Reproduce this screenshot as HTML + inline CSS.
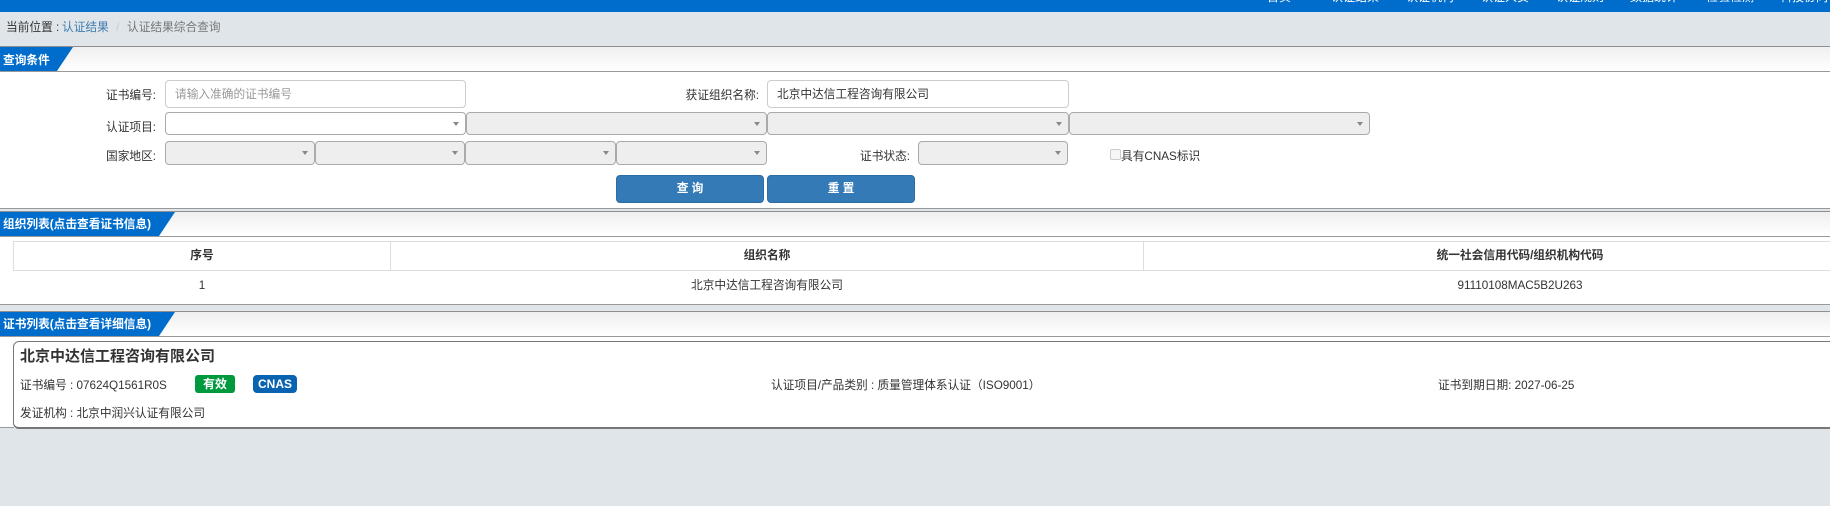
<!DOCTYPE html>
<html lang="zh-CN">
<head>
<meta charset="utf-8">
<title>认证结果综合查询</title>
<style>
html,body{margin:0;padding:0;width:1830px;height:506px;overflow:hidden;background:#e0e5e9;}
body{position:relative;font-family:"Liberation Sans","Noto Sans CJK SC",sans-serif;font-size:11.7px;color:#333;}
div,span{box-sizing:border-box;}
.a{position:absolute;}
.t{position:absolute;white-space:nowrap;line-height:20px;height:20px;margin-top:1px;}
.r{text-align:right;}
.c{text-align:center;transform:translateX(-50%);}
.nav{color:#fff;top:-13px;margin-top:0;font-size:12px;}
.white{position:absolute;left:0;width:1830px;background:#fff;}
.bar{position:absolute;left:0;width:1830px;height:26px;border-top:1px solid #8f8f8f;border-bottom:1px solid #999;background:linear-gradient(#efefef,#fff);}
.lab{position:absolute;left:0;top:0;height:24px;background:#006dcc;}
.lab1{width:73px;clip-path:polygon(0 0,73px 0,57px 24px,0 24px);}
.lab2{width:175px;clip-path:polygon(0 0,175px 0,159px 24px,0 24px);}
.lab span{position:absolute;left:3px;top:3px;line-height:20px;color:#fff;font-weight:bold;white-space:nowrap;}
.lab1 span{top:4px;}
.input{position:absolute;background:#fff;border:1px solid #ccc;border-radius:4px;height:28px;top:80px;line-height:28px;padding-left:9px;white-space:nowrap;}
.sel{position:absolute;background:#eee;border:1px solid #aaa;border-radius:4px;}
.sel:after{content:"";position:absolute;right:6px;top:50%;margin-top:-2px;border-left:3px solid transparent;border-right:3px solid transparent;border-top:4px solid #888;}
.s1{top:112px;height:23px;}
.s2{top:141px;height:24px;}
.btn{position:absolute;top:175px;height:28px;width:148px;background:#337ab7;border:1px solid #2e6da4;border-radius:4px;color:#fff;font-weight:bold;text-align:center;line-height:26px;}
.th{font-weight:bold;}
.badge{position:absolute;top:375px;height:18px;line-height:18px;color:#fff;font-weight:bold;font-size:12px;text-align:center;}
</style>
</head>
<body>
<div class="a" style="left:0;top:0;width:1830px;height:12px;background:#006dcc;overflow:hidden;"></div>
<span class="t nav" style="left:1267px;">首页</span>
<span class="t nav" style="left:1331px;">认证结果</span>
<span class="t nav" style="left:1406px;">认证机构</span>
<span class="t nav" style="left:1481px;">认证人员</span>
<span class="t nav" style="left:1556px;">认证规则</span>
<span class="t nav" style="left:1630px;">数据统计</span>
<span class="t nav" style="left:1706px;">检验检测</span>
<span class="t nav" style="left:1780px;">科技协同</span>

<span class="t" style="left:6px;top:17px;">当前位置 :</span>
<span class="t" style="left:62px;top:17px;color:#3f7cb0;">认证结果</span>
<span class="t" style="left:116px;top:17px;color:#ccc;">/</span>
<span class="t" style="left:127px;top:17px;color:#777;">认证结果综合查询</span>

<!-- Query section -->
<div class="white" style="top:72px;height:136px;"></div>
<div class="bar" style="top:46px;"><div class="lab lab1"><span>查询条件</span></div></div>

<span class="t r" style="right:1674px;top:85px;">证书编号:</span>
<div class="input" style="left:165px;width:301px;color:#999;">请输入准确的证书编号</div>
<span class="t r" style="right:1071px;top:85px;">获证组织名称:</span>
<div class="input" style="left:767px;width:302px;">北京中达信工程咨询有限公司</div>

<span class="t r" style="right:1674px;top:117px;">认证项目:</span>
<div class="sel s1" style="left:165px;width:301px;background:#fff;"></div>
<div class="sel s1" style="left:466px;width:301px;"></div>
<div class="sel s1" style="left:767px;width:302px;"></div>
<div class="sel s1" style="left:1069px;width:301px;"></div>

<span class="t r" style="right:1674px;top:146px;">国家地区:</span>
<div class="sel s2" style="left:165px;width:150px;"></div>
<div class="sel s2" style="left:315px;width:150px;"></div>
<div class="sel s2" style="left:465px;width:151px;"></div>
<div class="sel s2" style="left:616px;width:151px;"></div>

<span class="t r" style="right:920px;top:146px;">证书状态:</span>
<div class="sel s2" style="left:918px;width:150px;"></div>

<div class="a" style="left:1110px;top:149px;width:11px;height:11px;border:1px solid #ccc;border-radius:2px;background:#f6f6f6;"></div>
<span class="t" style="left:1121px;top:146px;">具有CNAS标识</span>

<div class="btn" style="left:616px;">查&nbsp;询</div>
<div class="btn" style="left:767px;">重&nbsp;置</div>

<!-- Organisation list -->
<div class="a" style="left:0;top:208px;width:1830px;height:1px;background:#999;"></div>
<div class="white" style="top:237px;height:67px;"></div>
<div class="bar" style="top:211px;"><div class="lab lab2"><span>组织列表(点击查看证书信息)</span></div></div>

<div class="a" style="left:13px;top:241px;width:1884px;height:30px;border:1px solid #ddd;"></div>
<div class="a" style="left:390px;top:241px;width:1px;height:30px;background:#ddd;"></div>
<div class="a" style="left:1143px;top:241px;width:1px;height:30px;background:#ddd;"></div>
<span class="t c th" style="left:202px;top:245px;">序号</span>
<span class="t c th" style="left:767px;top:245px;">组织名称</span>
<span class="t c th" style="left:1520px;top:245px;">统一社会信用代码/组织机构代码</span>
<span class="t c" style="left:202px;top:275px;">1</span>
<span class="t c" style="left:767px;top:275px;">北京中达信工程咨询有限公司</span>
<span class="t c" style="left:1520px;top:275px;">91110108MAC5B2U263</span>
<div class="a" style="left:0;top:304px;width:1830px;height:1px;background:#999;"></div>

<!-- Certificate list -->
<div class="white" style="top:337px;height:91px;"></div>
<div class="bar" style="top:311px;"><div class="lab lab2"><span>证书列表(点击查看详细信息)</span></div></div>
<div class="a" style="left:0;top:427px;width:14px;height:1px;background:#999;"></div>
<div class="a" style="left:13px;top:341px;width:1860px;height:88px;border:1px solid #777;border-bottom-width:2px;border-radius:6px;background:#fff;"></div>

<span class="t" style="left:20px;top:346px;font-size:15px;font-weight:bold;color:#333;">北京中达信工程咨询有限公司</span>
<span class="t" style="left:20px;top:375px;">证书编号 : 07624Q1561R0S</span>
<div class="badge" style="left:195px;width:40px;background:#009a3e;border-radius:3px;">有效</div>
<div class="badge" style="left:253px;width:44px;background:#0a63b0;border-radius:4px;">CNAS</div>
<span class="t" style="left:771px;top:375px;">认证项目/产品类别 : 质量管理体系认证（ISO9001）</span>
<span class="t" style="left:1438px;top:375px;">证书到期日期: 2027-06-25</span>
<span class="t" style="left:20px;top:403px;">发证机构 : 北京中润兴认证有限公司</span>
</body>
</html>
